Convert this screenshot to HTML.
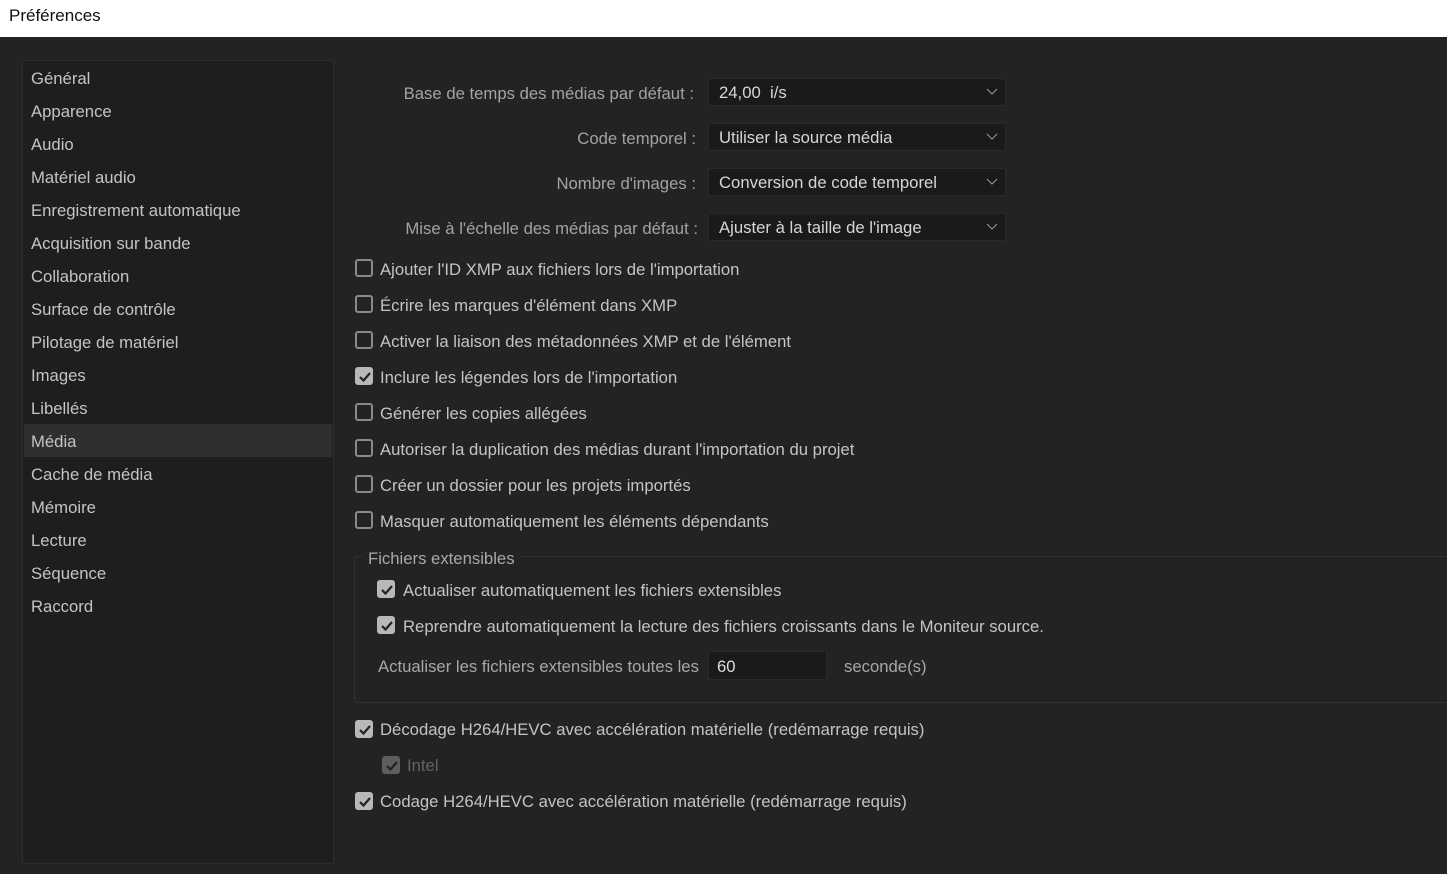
<!DOCTYPE html><html><head><meta charset="utf-8"><style>
*{margin:0;padding:0;box-sizing:border-box}
body{width:1447px;height:874px;background:#232323;font-family:"Liberation Sans",sans-serif;font-size:16.7px;color:#c4c4c4;position:relative;overflow:hidden}
.t{position:absolute;white-space:nowrap;line-height:20px;margin-top:1px}
#title{position:absolute;left:0;top:0;width:1447px;height:37px;background:#fff;color:#111;font-size:17px;padding:6px 0 0 9px}
#side{position:absolute;left:22px;top:60px;width:312px;height:804px;background:#1e1e1e;border:1px solid #2c2c2c}
.sel{position:absolute;left:24px;top:424px;width:308px;height:33px;background:#2f2f2f}
.lab{color:#a3a3a3;text-align:right;width:420px}
.dd{position:absolute;left:708px;width:298px;height:28px;background:#1a1a1a;border:1px solid #2a2a2a;border-radius:2px;color:#d6d6d6;padding:4px 0 0 10px;line-height:20px}
.dd svg{position:absolute;right:7px;top:9px}
.cb{position:absolute;width:18px;height:18px;border:2px solid #8a8a8a;border-radius:3px}
.cb.on{background:#b8b8b8;border-color:#b8b8b8}
.cb.on svg{position:absolute;left:1px;top:1px}
.dim{opacity:.4}
</style></head><body>
<div id="title">Préférences</div>
<div id="side"></div><div class="sel"></div>
<div class="t" style="left:31px;top:68px">Général</div>
<div class="t" style="left:31px;top:101px">Apparence</div>
<div class="t" style="left:31px;top:134px">Audio</div>
<div class="t" style="left:31px;top:167px">Matériel audio</div>
<div class="t" style="left:31px;top:200px">Enregistrement automatique</div>
<div class="t" style="left:31px;top:233px">Acquisition sur bande</div>
<div class="t" style="left:31px;top:266px">Collaboration</div>
<div class="t" style="left:31px;top:299px">Surface de contrôle</div>
<div class="t" style="left:31px;top:332px">Pilotage de matériel</div>
<div class="t" style="left:31px;top:365px">Images</div>
<div class="t" style="left:31px;top:398px">Libellés</div>
<div class="t" style="left:31px;top:431px">Média</div>
<div class="t" style="left:31px;top:464px">Cache de média</div>
<div class="t" style="left:31px;top:497px">Mémoire</div>
<div class="t" style="left:31px;top:530px">Lecture</div>
<div class="t" style="left:31px;top:563px">Séquence</div>
<div class="t" style="left:31px;top:596px">Raccord</div>

<div class="t lab" style="left:274px;top:83px">Base de temps des médias par défaut :</div>
<div class="t lab" style="left:276px;top:128px">Code temporel :</div>
<div class="t lab" style="left:276px;top:173px">Nombre d'images :</div>
<div class="t lab" style="left:278px;top:218px">Mise à l'échelle des médias par défaut :</div>
<div class="dd" style="top:78px">24,00&nbsp; i/s<svg width="12" height="8"><path d="M1 1l5 5 5-5" stroke="#999" fill="none"/></svg></div>
<div class="dd" style="top:123px">Utiliser la source média<svg width="12" height="8"><path d="M1 1l5 5 5-5" stroke="#999" fill="none"/></svg></div>
<div class="dd" style="top:168px">Conversion de code temporel<svg width="12" height="8"><path d="M1 1l5 5 5-5" stroke="#999" fill="none"/></svg></div>
<div class="dd" style="top:213px">Ajuster à la taille de l'image<svg width="12" height="8"><path d="M1 1l5 5 5-5" stroke="#999" fill="none"/></svg></div>

<div class="cb" style="left:355px;top:259px"></div><div class="t" style="left:380px;top:259px">Ajouter l'ID XMP aux fichiers lors de l'importation</div>
<div class="cb" style="left:355px;top:295px"></div><div class="t" style="left:380px;top:295px">Écrire les marques d'élément dans XMP</div>
<div class="cb" style="left:355px;top:331px"></div><div class="t" style="left:380px;top:331px">Activer la liaison des métadonnées XMP et de l'élément</div>
<div class="cb on" style="left:355px;top:367px"><svg width="14" height="14"><path d="M2 7l3.5 3.5L12 3" stroke="#222" stroke-width="2.2" fill="none"/></svg></div><div class="t" style="left:380px;top:367px">Inclure les légendes lors de l'importation</div>
<div class="cb" style="left:355px;top:403px"></div><div class="t" style="left:380px;top:403px">Générer les copies allégées</div>
<div class="cb" style="left:355px;top:439px"></div><div class="t" style="left:380px;top:439px">Autoriser la duplication des médias durant l'importation du projet</div>
<div class="cb" style="left:355px;top:475px"></div><div class="t" style="left:380px;top:475px">Créer un dossier pour les projets importés</div>
<div class="cb" style="left:355px;top:511px"></div><div class="t" style="left:380px;top:511px">Masquer automatiquement les éléments dépendants</div>

<div style="position:absolute;left:354px;top:556px;width:1100px;height:147px;border:1px solid #333;border-radius:3px"></div>
<div class="t" style="left:362px;top:548px;background:#232323;padding:0 6px;color:#a8a8a8">Fichiers extensibles</div>
<div class="cb on" style="left:377px;top:580px"><svg width="14" height="14"><path d="M2 7l3.5 3.5L12 3" stroke="#222" stroke-width="2.2" fill="none"/></svg></div><div class="t" style="left:403px;top:580px">Actualiser automatiquement les fichiers extensibles</div>
<div class="cb on" style="left:377px;top:616px"><svg width="14" height="14"><path d="M2 7l3.5 3.5L12 3" stroke="#222" stroke-width="2.2" fill="none"/></svg></div><div class="t" style="left:403px;top:616px">Reprendre automatiquement la lecture des fichiers croissants dans le Moniteur source.</div>
<div class="t" style="left:378px;top:656px;color:#a8a8a8">Actualiser les fichiers extensibles toutes les</div>
<div style="position:absolute;left:708px;top:651px;width:119px;height:29px;background:#1a1a1a;border:1px solid #2a2a2a;border-radius:2px;padding:5px 0 0 8px;line-height:20px;color:#ddd">60</div>
<div class="t" style="left:844px;top:656px;color:#a8a8a8">seconde(s)</div>

<div class="cb on" style="left:355px;top:720px"><svg width="14" height="14"><path d="M2 7l3.5 3.5L12 3" stroke="#222" stroke-width="2.2" fill="none"/></svg></div><div class="t" style="left:380px;top:719px">Décodage H264/HEVC avec accélération matérielle (redémarrage requis)</div>
<div class="cb on dim" style="left:382px;top:756px"><svg width="14" height="14"><path d="M2 7l3.5 3.5L12 3" stroke="#222" stroke-width="2.2" fill="none"/></svg></div><div class="t dim" style="left:407px;top:755px">Intel</div>
<div class="cb on" style="left:355px;top:792px"><svg width="14" height="14"><path d="M2 7l3.5 3.5L12 3" stroke="#222" stroke-width="2.2" fill="none"/></svg></div><div class="t" style="left:380px;top:791px">Codage H264/HEVC avec accélération matérielle (redémarrage requis)</div>
</body></html>
